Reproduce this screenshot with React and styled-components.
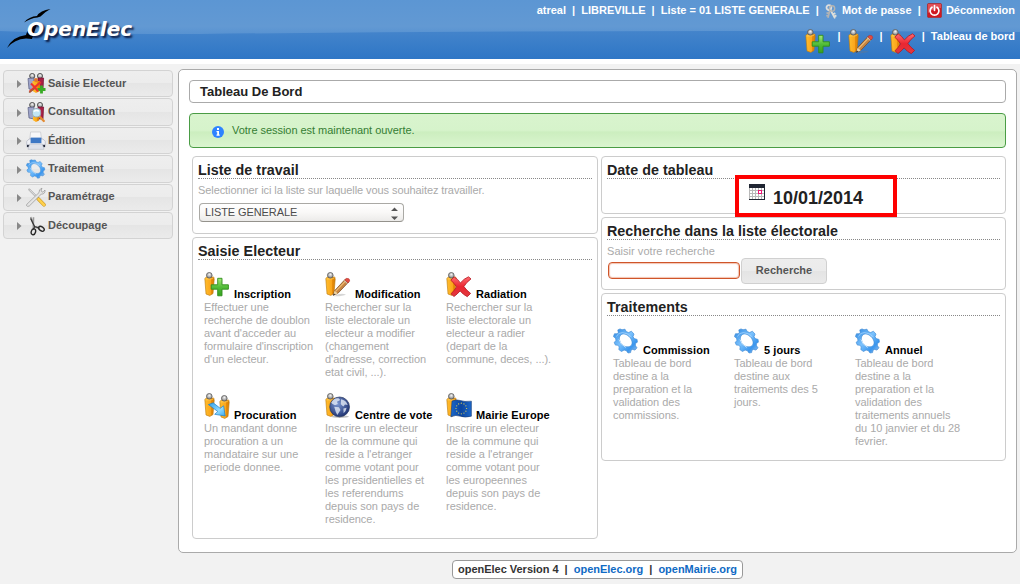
import React from "react";
import styled, { createGlobalStyle } from "styled-components";

const Global = createGlobalStyle`
  * { box-sizing: border-box; }
  body {
    margin: 0;
    background: #f2f2f2;
    font-family: "Liberation Sans", Arial, sans-serif;
    font-size: 11px;
    line-height: 13px;
    color: #222;
    overflow: hidden;
  }
`;

const Page = styled.div`
  width: 1020px;
  height: 584px;
  display: flex;
  flex-direction: column;
`;

const Header = styled.header`
  position: relative;
  flex: none;
  height: 64px;
  border-bottom: 5px solid #fff;
  display: flex;
  justify-content: space-between;
  background: linear-gradient(#5c96d3, #6299d3 45%, #5691d1 60%);
`;

const HeaderWave = styled.svg`
  position: absolute;
  left: 0;
  top: 0;
`;

const Logo = styled.div`
  position: relative;
  padding: 16px 0 0 27px;
  font: italic bold 20px/27px "DejaVu Sans", sans-serif;
  color: #fff;
  text-shadow: 2px 2px 2px rgba(0, 0, 30, 0.8);

  svg {
    position: absolute;
    left: 0;
    top: 0;
  }
  span {
    position: relative;
  }
`;

const HeaderNav = styled.div`
  position: relative;
  padding-right: 5px;
  font-weight: bold;
  color: #fff;
`;

const NavLine = styled.div`
  display: flex;
  justify-content: flex-end;
  align-items: flex-start;
  height: 26px;
  padding-top: 4px;
  white-space: pre;

  svg {
    flex: none;
  }
`;

const NavIcon = styled.span`
  display: flex;
  height: 16px;
  margin: ${(p) => p.$margin};
`;

const Body = styled.div`
  display: flex;
  align-items: flex-start;
  padding: 5px 3px 0 3px;
`;

const Menu = styled.nav`
  width: 170px;
  margin: 1px 5px 0 0;
  display: flex;
  flex-direction: column;
  gap: 1px;
`;

const MenuItem = styled.div`
  height: 27.4px;
  display: flex;
  align-items: center;
  padding: 0 0 0.6px 13px;
  border: 1px solid #d3d3d3;
  border-radius: 4px;
  background: linear-gradient(#eeeeee, #ececec 49%, #e5e5e5 50%, #ebebeb);
  color: #555;
  font-weight: bold;

  > svg:first-child {
    margin: 2px 4px 0 0;
  }
  > svg + svg {
    margin: 1px 2px 0 0;
  }
`;

const Content = styled.main`
  width: 839px;
  height: 484px;
  padding: 10px;
  border: 1px solid #aaa;
  border-radius: 5px;
  background: #fff;
`;

const PageTitle = styled.h1`
  margin: 0;
  height: 23px;
  padding-left: 10px;
  border: 1px solid #aaa;
  border-radius: 4px;
  font-size: 13px;
  line-height: 21px;
`;

const Message = styled.div`
  height: 35px;
  margin-top: 10px;
  padding: 0 0 0 22px;
  display: flex;
  border: 1px solid #4a9c45;
  border-radius: 4px;
  background: linear-gradient(#d9f4ce, #d6f3cb 49%, #cceebf 55%, #daf5cf);
  color: #357d33;
  letter-spacing: -0.04px;

  svg {
    margin: 12px 8px 0 0;
  }
  span {
    margin-top: 10px;
  }
`;

const Columns = styled.div`
  display: flex;
  gap: 3px;
  margin: 8px 0 0 3px;
`;

const Column = styled.div`
  width: ${(p) => p.$width}px;
  display: flex;
  flex-direction: column;
  gap: 3px;
`;

const Widget = styled.section`
  position: relative;
  height: ${(p) => p.$height}px;
  padding: 5px;
  border: 1px solid #ccc;
  border-radius: 4px;
  background: #fff;
`;

const WidgetTitle = styled.h2`
  margin: 0;
  height: 17px;
  border-bottom: 1px dotted #888;
  font-size: 14.3px;
  line-height: 16px;
  letter-spacing: 0.04px;
`;

const Hint = styled.p`
  margin: 5px 0 0;
  color: #aaa;
  letter-spacing: ${(p) => p.$spacing}px;
`;

const Select = styled.div`
  width: 205px;
  height: 19px;
  margin: 6px 0 0 1px;
  padding: 0 5px;
  display: flex;
  align-items: center;
  justify-content: space-between;
  border: 1px solid #aaa9a5;
  border-bottom-color: #94928c;
  border-radius: 4px;
  background: linear-gradient(#fff, #f9f8f7 50%, #ecebe9);
  color: #4c4c4c;
  letter-spacing: -0.1px;

  svg {
    margin-top: 2px;
  }
`;

const DateBox = styled.div`
  position: absolute;
  left: 133px;
  top: 18px;
  width: 162px;
  height: 42px;
  display: flex;
  padding-left: 10px;
  border: 4px solid #fe0000;
  background: #fff;
  font-size: 18px;
  font-weight: bold;

  svg {
    margin: 5px 8px 0 0;
  }
  span {
    margin-top: 9px;
    line-height: 20px;
  }
`;

const SearchRow = styled.div`
  display: flex;
  gap: 1px;
  margin-left: 1px;
`;

const SearchInput = styled.input`
  width: 132px;
  height: 17px;
  margin: 4px 0 0;
  padding: 0 4px;
  border: 1px solid #cf5529;
  border-radius: 4px;
  box-shadow: inset 0 0 1px 1px #f3c3b1;
  background: #fff;
  outline: none;
  font: inherit;
`;

const SearchButton = styled.button`
  width: 86px;
  height: 26px;
  padding: 0 0 2px;
  border: 1px solid #d0d0d0;
  border-radius: 4px;
  background: linear-gradient(#ededed, #ebebeb 49%, #e4e4e4 50%, #eaeaea);
  font: bold 11px "Liberation Sans", sans-serif;
  color: #555;
`;

const Tiles = styled.div`
  display: grid;
  grid-template-columns: repeat(3, 121px);
  grid-auto-rows: 121px;
  padding: 12px 0 0 6px;
`;

const Tile = styled.div`
  color: #aaa;
  white-space: pre;
  letter-spacing: -0.03px;
`;

const TileHead = styled.div`
  height: 29px;
  display: flex;
  color: #000;
  font-weight: bold;
  letter-spacing: 0.07px;

  svg {
    flex: none;
    margin-right: 4px;
  }
  span {
    margin-top: 16px;
  }
`;

const Footer = styled.footer`
  align-self: center;
  width: 291px;
  height: 19px;
  margin: 7px 0 0 175px;
  border: 1px solid #999;
  border-radius: 4px;
  background: #fff;
  display: flex;
  justify-content: center;
  font-weight: bold;
  line-height: 17px;
  letter-spacing: -0.02px;
  white-space: pre;
  color: #333;

  a {
    color: #0f6ac4;
  }
`;

/* Shared gradients for every icon */
const HiddenSvg = styled.svg`
  position: absolute;
`;

const Defs = () => (
  <HiddenSvg width="0" height="0">
    <defs>
      <linearGradient id="body" x1="0" x2="1">
        <stop offset="0" stopColor="#ffbe2c" />
        <stop offset=".62" stopColor="#fba61c" />
        <stop offset=".68" stopColor="#e88d0a" />
        <stop offset="1" stopColor="#d98104" />
      </linearGradient>
      <radialGradient id="head" cx=".5" cy=".35" r=".6">
        <stop offset="0" stopColor="#f5f5f5" />
        <stop offset="1" stopColor="#888" />
      </radialGradient>
      <linearGradient id="green" x1="0" y1="0" x2="0" y2="1">
        <stop offset="0" stopColor="#a5e87a" />
        <stop offset=".5" stopColor="#52bd3a" />
        <stop offset="1" stopColor="#36a01f" />
      </linearGradient>
      <linearGradient id="red" x1="0" y1="0" x2="0" y2="1">
        <stop offset="0" stopColor="#ff6c70" />
        <stop offset=".5" stopColor="#ea2631" />
        <stop offset="1" stopColor="#e23b40" />
      </linearGradient>
      <linearGradient id="gear" x1="0" y1="0" x2="1" y2="1">
        <stop offset="0" stopColor="#2a86e0" />
        <stop offset=".45" stopColor="#7cc2fd" />
        <stop offset=".75" stopColor="#3a96ee" />
        <stop offset="1" stopColor="#a9c6ea" />
      </linearGradient>
      <radialGradient id="globe" cx=".4" cy=".35" r=".7">
        <stop offset="0" stopColor="#7a96d0" />
        <stop offset="1" stopColor="#1c2f6e" />
      </radialGradient>
      <linearGradient id="arrow" x1="0" y1="0" x2="1" y2="1">
        <stop offset="0" stopColor="#2c9ce6" />
        <stop offset=".6" stopColor="#94dcff" />
        <stop offset="1" stopColor="#36a9ef" />
      </linearGradient>
      <linearGradient id="flag" x1="0" x2="1">
        <stop offset="0" stopColor="#1a68cb" />
        <stop offset=".5" stopColor="#0b459f" />
        <stop offset="1" stopColor="#1c68c9" />
      </linearGradient>
      <linearGradient id="wave" x1="0" y1="0" x2="0" y2="1">
        <stop offset="0" stopColor="#4484cb" />
        <stop offset="1" stopColor="#2e76c6" />
      </linearGradient>
    </defs>
  </HiddenSvg>
);

const Person = ({ x = 0, y = 0 }) => (
  <g transform={`translate(${x} ${y})`}>
    <path d="M.8 6.4 2.4 5H9.8L10.2 7.3 9 21.6 5.8 23.4 2 22Z" fill="url(#body)" stroke="#b9770f" strokeWidth=".6" />
    <path d="M1.6 6.9H7.2L9.6 5.6" stroke="#ffd465" strokeWidth=".7" fill="none" />
    <circle cx="5.3" cy="3.3" r="2.8" fill="url(#head)" stroke="#5c5c5c" strokeWidth=".8" />
  </g>
);

const Plus = () => (
  <path d="M13.7 6.3H18V12.8H24.4V17.2H18V23.8H13.7V17.2H7.2V12.8H13.7Z" fill="url(#green)" stroke="#2f8d1c" strokeWidth=".9" />
);

const Pencil = () => (
  <g>
    <path d="M9 24.2Q15 20.5 21 22.4Q18 24.4 9 24.2" fill="#777" opacity=".3" />
    <path d="M8.2 23.3 9.6 18.7 20.4 7.1 23.6 10.1 12.8 21.4Z" fill="#c78643" stroke="#79431b" strokeWidth=".7" />
    <path d="M10.6 19.4 20.6 8.9" stroke="#edbd76" strokeWidth="1.2" />
    <path d="M8.2 23.3 9.6 18.7 12.8 21.4Z" fill="#ecd4a4" />
    <path d="m8 23.6.8-2.2 1.5 1.2Z" fill="#222" />
    <path d="M19.8 8 21.3 6.3Q24.9 5.8 24.8 9.1L23 11Z" fill="#e24b42" stroke="#a32a25" strokeWidth=".4" />
    <path d="m19.2 8.6 3.2 3" stroke="#ccc" strokeWidth="1" />
  </g>
);

const Cross = () => (
  <path
    d="M4.8 8.2 8.2 4.9Q11.6 6.8 14.4 10.9Q17.9 6.7 22.5 4.8L25 6.9Q20.2 10.4 17.9 14.6Q20.6 18.4 24.6 21.4L21.3 24.7Q17.3 22.8 14.1 18.9Q11.1 22.4 8 24.5L5 21.8Q8.3 18.5 10.6 14.9Q8.4 11.3 4.8 8.2Z"
    fill="url(#red)"
    stroke="#b51721"
    strokeWidth=".8"
  />
);

const Gear = ({ size = 26 }) => (
  <svg width={size} height={size} viewBox="0 0 26 26">
    <path
      fillRule="evenodd"
      d="M9 1.7 12 1.2 13.2 3.6 15.6 4.5 18.4 3.2 21 6.1 20 8.8 21.3 10.6 24.1 11.4 24.4 14.2 22.4 15.5 22.5 17.8 24 19.8 22 22.1 19.5 21.4 18 22.3 17.6 24.6 15 25 13.4 22.7 11.1 22.1 8.5 23.5 5.8 21.6 6.2 18.9 4.8 17.2 2.4 17.1 1.1 14.4 3 12.5 2.5 10.2.4 8.6 1.5 5.7 4 5.8 5.3 4.5 4.8 1.9 7 .9ZM7.6 7.2C5.5 9.4 6.2 13.9 9.1 16.7S16.5 19.3 18.2 17.4 19.1 11.4 16 8.5 9.6 5.2 7.6 7.2Z"
      fill="url(#gear)"
      stroke="#3784d2"
      strokeWidth=".6"
    />
    <path d="M3.5 8.5Q5 4.6 9.2 4.6Q14.5 4.8 18.5 9" fill="none" stroke="#b5dcff" strokeWidth=".8" opacity=".8" />
    <path d="M5.9 11.5Q7.4 16.6 12.8 19.4" fill="none" stroke="#c8e6ff" strokeWidth="1" />
  </svg>
);

const STAR_ANGLES = Array.from({ length: 12 }, (_, i) => (i * Math.PI) / 6);

const overlays = {
  add: <Plus />,
  edit: <Pencil />,
  remove: <Cross />,
  proxy: (
    <g>
      <Person x={15} y={2} />
      <path d="M4.4 11.6 9.2 9.8 16.2 15.3 19.6 12.8 21.2 23 10.7 21.3 13.8 18.5Z" fill="url(#arrow)" stroke="#1d7fca" strokeWidth=".7" />
    </g>
  ),
  globe: (
    <g>
      <ellipse cx="15" cy="23.6" rx="9" ry="1.3" opacity=".25" />
      <circle cx="14.6" cy="13.9" r="9.9" fill="url(#globe)" stroke="#26365f" strokeWidth=".7" />
      <path d="M6.2 9.5Q9 4.6 13.5 5.2L15.3 7 12 8.8 12.8 11 10 12.2 7.5 11ZM16 6.2Q21 7 22.7 12L20 11.5 18.3 13.6 15.8 11.3ZM9.2 13.7 14 14.3 15.5 17.1 12.3 22 10.7 18.7ZM18.4 15.5 21.6 14.8Q21 18.5 18.6 20.3Z" fill="#e3ebf6" opacity=".8" />
    </g>
  ),
  europe: (
    <g>
      <path d="M6 8.1Q10.5 6 14.3 7.5T25.4 8.2V23.2Q18.7 25 14.3 23.2T4.9 23.8Z" fill="url(#flag)" stroke="#173c75" strokeWidth=".6" />
      {STAR_ANGLES.map((a) => (
        <circle key={a} cx={15.3 + Math.cos(a) * 5.3} cy={15.5 + Math.sin(a) * 5.3} r=".6" fill="#e3d350" />
      ))}
    </g>
  ),
};

const VoterIcon = ({ kind }) => (
  <svg width="26" height="26" viewBox="0 0 26 26">
    <Person />
    {overlays[kind]}
  </svg>
);

const GroupPeople = () => (
  <g>
    <circle cx="6.2" cy="3" r="2.6" fill="url(#head)" stroke="#444" strokeWidth=".8" />
    <circle cx="14" cy="3" r="2.6" fill="url(#head)" stroke="#444" strokeWidth=".8" />
    <path d="M2 5.5 8 5V17L3 16Z" fill="#9fa5cb" stroke="#55597d" strokeWidth=".7" />
    <path d="M12 5H17.6L17 17H12Z" fill="#a91f45" stroke="#6e1431" strokeWidth=".7" />
  </g>
);

const menuIcons = {
  entry: (
    <svg width="20" height="21" viewBox="0 0 20 21">
      <GroupPeople />
      <path d="M6.5 8H14V18L10 20 6.5 18Z" fill="url(#body)" />
      <circle cx="10" cy="7" r="2.1" fill="#df762f" />
      <path d="M15.5 12.5V20.5M11.5 16.5H19.5" stroke="#39ab26" strokeWidth="2.8" />
      <path d="M3.5 18.8Q8 15 14.7 9M5 10.5Q9 14 12 18.4" stroke="#ec3330" strokeWidth="2.2" fill="none" />
      <path d="m3 19.6 5.5-3.8" stroke="#9c633a" strokeWidth="1.2" />
    </svg>
  ),
  search: (
    <svg width="20" height="21" viewBox="0 0 20 21">
      <GroupPeople />
      <path d="M7 12H13V18.5L10 20 7 18.3Z" fill="url(#body)" />
      <path d="m14 15 3.8 4" stroke="#e38b32" strokeWidth="2.3" strokeLinecap="round" />
      <rect x="6.4" y="6.5" width="8.2" height="8.4" rx="3.2" fill="#c1e5f6" stroke="#99abb4" />
      <path d="M7.7 9.5Q10 7.5 13 9.2" stroke="#fff" fill="none" strokeWidth="1.4" />
    </svg>
  ),
  print: (
    <svg width="20" height="20" viewBox="0 0 20 20">
      <path d="M4.6 1H14.6L15.5 8H3.8Z" fill="#f7f7f9" stroke="#c4c5ca" strokeWidth=".7" />
      <path d="M3 8H17L19.3 10.5V15Q19.3 16.6 17.5 16.6H2.5Q.7 16.6.7 15V10.5Z" fill="#eef0f6" stroke="#b1b5c3" strokeWidth=".7" />
      <path d="M4.6 6.6H15.4V12.2H4.6Z" fill="#3e78c5" />
      <path d="M1 13.8H19V16H1Z" fill="#262c3d" />
      <path d="M3.6 13H16.4L18 18.3H2Z" fill="#dfe2ea" stroke="#aeb3bd" strokeWidth=".5" />
    </svg>
  ),
  gear: <Gear size={20} />,
  tools: (
    <svg width="20" height="20" viewBox="0 0 20 20">
      <path d="M3.2 2.5 12.2 11.5" stroke="#a6a6a6" strokeWidth="1.9" strokeLinecap="round" />
      <path d="M3.2 2.5 12.2 11.5" stroke="#eee" strokeWidth="1" />
      <path d="M12.4 12 18 17.8" stroke="#c99b2c" strokeWidth="3.6" strokeLinecap="round" />
      <path d="M12.4 12 18 17.8" stroke="#ffd04b" strokeWidth="2.5" strokeLinecap="round" />
      <path d="M1 17.1 13 5.6Q12.7 2.2 16 1.1L15 4 17 5.2 19 3Q19.6 7 15.1 7.3L3.2 19.1Q1.3 20 .2 18.3Z" fill="#e4e4e4" stroke="#8a8a8a" strokeWidth=".6" />
    </svg>
  ),
  scissors: (
    <svg width="20" height="20" viewBox="0 0 20 20">
      <path d="M4.7 1.1 8.6 12M7.5 1.3 7.3 12M8.3 11 14 12.4" stroke="#999" strokeWidth="1.6" fill="none" />
      <path d="M4.6 2.6 8.6 10.6 12.5 11.6M8.6 10.6 7.4 13.6" stroke="#333" strokeWidth="1.2" fill="none" />
      <ellipse cx="7.4" cy="15.8" rx="2.1" ry="3" transform="rotate(18 7.4 15.8)" fill="none" stroke="#292929" strokeWidth="1.4" />
      <ellipse cx="15.4" cy="12.8" rx="3.1" ry="2" transform="rotate(35 15.4 12.8)" fill="none" stroke="#292929" strokeWidth="1.4" />
    </svg>
  ),
};

const KeysIcon = () => (
  <svg width="13" height="16" viewBox="0 0 13 16">
    <path d="M5 5.5 2.9 13.8M3.8 9.3 1.5 8.9M3.2 12 1.2 11.5" stroke="#b2b3b3" strokeWidth="1.8" />
    <path d="m5.5 6 4.5 8.4M8 10.4 10.3 9M9.2 12.6 11.4 11.4" stroke="#deded9" strokeWidth="1.8" />
    <circle cx="3.9" cy="3.6" r="2.4" fill="none" stroke="#dedede" strokeWidth="1.8" />
    <circle cx="7" cy="4.4" r="2.7" fill="none" stroke="#b4b4b1" strokeWidth="1.4" />
  </svg>
);

const PowerIcon = () => (
  <svg width="15" height="15" viewBox="0 0 15 15">
    <rect x=".4" y=".4" width="14.2" height="14.2" rx="1.5" fill="#cf1822" stroke="#a43035" strokeWidth=".8" />
    <path d="M1 1H14V5Q7 5 1 10Z" fill="#ef7175" opacity=".6" />
    <path d="M5 4.2A4.4 4.4 0 1 0 10 4.2M7.5 2.5V7.3" fill="none" stroke="#fff" strokeWidth="1.7" strokeLinecap="round" />
  </svg>
);

const CalendarIcon = () => (
  <svg width="16" height="16" viewBox="0 0 16 16" shapeRendering="crispEdges">
    <rect width="16" height="16" fill="#202633" />
    <path d="M0 4H15V15H0Z" fill="#b9b9b9" />
    {[4, 7, 10, 13].map((y) =>
      [1, 4, 7, 10, 13].map((x) => <rect key={`${x}-${y}`} x={x} y={y} width="2" height="2" fill="#fff" />)
    )}
    <rect x="9.5" y="6.5" width="3" height="3" fill="#fff" stroke="#ed1675" />
  </svg>
);

const MENU = [
  ["Saisie Electeur", "entry"],
  ["Consultation", "search"],
  ["Édition", "print"],
  ["Traitement", "gear"],
  ["Paramétrage", "tools"],
  ["Découpage", "scissors"],
];

const ENTRY_TILES = [
  ["add", "Inscription", "Effectuer une\nrecherche de doublon\navant d'acceder au\nformulaire d'inscription\nd'un electeur."],
  ["edit", "Modification", "Rechercher sur la\nliste electorale un\nelecteur a modifier\n(changement\nd'adresse, correction\netat civil, ...)."],
  ["remove", "Radiation", "Rechercher sur la\nliste electorale un\nelecteur a radier\n(depart de la\ncommune, deces, ...)."],
  ["proxy", "Procuration", "Un mandant donne\nprocuration a un\nmandataire sur une\nperiode donnee."],
  ["globe", "Centre de vote", "Inscrire un electeur\nde la commune qui\nreside a l'etranger\ncomme votant pour\nles presidentielles et\nles referendums\ndepuis son pays de\nresidence."],
  ["europe", "Mairie Europe", "Inscrire un electeur\nde la commune qui\nreside a l'etranger\ncomme votant pour\nles europeennes\ndepuis son pays de\nresidence."],
];

const PROCESS_TILES = [
  ["Commission", "Tableau de bord\ndestine a la\npreparation et la\nvalidation des\ncommissions."],
  ["5 jours", "Tableau de bord\ndestine aux\ntraitements des 5\njours."],
  ["Annuel", "Tableau de bord\ndestine a la\npreparation et la\nvalidation des\ntraitements annuels\ndu 10 janvier et du 28\nfevrier."],
];

export default function App() {
  return (
    <Page>
      <Global />
      <Defs />
      <Header>
        <HeaderWave width="1020" height="59">
          <path d="M0 31Q90 34.5 200 34Q620 29 1020 32V59H0Z" fill="url(#wave)" />
        </HeaderWave>
        <Logo>
          <svg width="60" height="55" viewBox="0 0 60 55">
            <path d="M24 22.5Q29 16.5 37 16Q40 10.5 50.5 9Q44.5 12 40.5 16.5L37.5 17.4Q30 18.2 24 22.5Z" fill="#000" />
            <path d="M7 48Q12.5 36.5 26 35Q27.5 28 37 24L32 39 26 38.5Q14.5 39 7 48Z" fill="#000" />
          </svg>
          <span>OpenElec</span>
        </Logo>
        <HeaderNav>
          <NavLine>
            {"atreal  |  LIBREVILLE  |  Liste = 01 LISTE GENERALE  |  "}
            <NavIcon $margin="0 4px 0 0"><KeysIcon /></NavIcon>
            {"Mot de passe  |  "}
            <NavIcon $margin="-1px 4px 0 0"><PowerIcon /></NavIcon>
            {"Déconnexion"}
          </NavLine>
          <NavLine>
            <NavIcon $margin="-1px 7px 0 0"><VoterIcon kind="add" /></NavIcon>
            {"|"}
            <NavIcon $margin="-1px 6px 0 7px"><VoterIcon kind="edit" /></NavIcon>
            {"|"}
            <NavIcon $margin="-1px 6px 0 7px"><VoterIcon kind="remove" /></NavIcon>
            {"|  Tableau de bord"}
          </NavLine>
        </HeaderNav>
      </Header>

      <Body>
        <Menu>
          {MENU.map(([label, icon]) => (
            <MenuItem key={label}>
              <svg width="5" height="8" viewBox="0 0 5 8"><path d="M0 0 4.5 4 0 8Z" fill="#888" /></svg>
              {menuIcons[icon]}
              {label}
            </MenuItem>
          ))}
        </Menu>

        <Content>
          <PageTitle>Tableau De Bord</PageTitle>
          <Message>
            <svg width="12" height="12" viewBox="0 0 12 12">
              <circle cx="6" cy="6" r="6" fill="#2e83ff" />
              <path d="M5 2H7V4H5ZM4.5 5H7V8.5H7.7V9.7H4.5V8.5H5.2V6.2H4.5Z" fill="#fff" />
            </svg>
            <span>Votre session est maintenant ouverte.</span>
          </Message>

          <Columns>
            <Column $width={406}>
              <Widget $height={78}>
                <WidgetTitle>Liste de travail</WidgetTitle>
                <Hint $spacing={-0.08}>Selectionner ici la liste sur laquelle vous souhaitez travailler.</Hint>
                <Select>
                  LISTE GENERALE
                  <svg width="7" height="13" viewBox="0 0 7 13">
                    <path d="M0 4 3.5 .5 7 4ZM0 9.5 3.5 13 7 9.5Z" fill="#555" />
                  </svg>
                </Select>
              </Widget>
              <Widget $height={302}>
                <WidgetTitle>Saisie Electeur</WidgetTitle>
                <Tiles>
                  {ENTRY_TILES.map(([kind, title, text]) => (
                    <Tile key={kind}>
                      <TileHead><VoterIcon kind={kind} /><span>{title}</span></TileHead>
                      {text}
                    </Tile>
                  ))}
                </Tiles>
              </Widget>
            </Column>

            <Column $width={405}>
              <Widget $height={58}>
                <WidgetTitle>Date de tableau</WidgetTitle>
                <DateBox><CalendarIcon /><span>10/01/2014</span></DateBox>
              </Widget>
              <Widget $height={73}>
                <WidgetTitle>Recherche dans la liste électorale</WidgetTitle>
                <Hint $spacing={0.04}>Saisir votre recherche</Hint>
                <SearchRow>
                  <SearchInput />
                  <SearchButton>Recherche</SearchButton>
                </SearchRow>
              </Widget>
              <Widget $height={168}>
                <WidgetTitle>Traitements</WidgetTitle>
                <Tiles>
                  {PROCESS_TILES.map(([title, text]) => (
                    <Tile key={title}>
                      <TileHead><Gear /><span>{title}</span></TileHead>
                      {text}
                    </Tile>
                  ))}
                </Tiles>
              </Widget>
            </Column>
          </Columns>
        </Content>
      </Body>

      <Footer>
        {"openElec Version 4  |  "}<a>openElec.org</a>{"  |  "}<a>openMairie.org</a>
      </Footer>
    </Page>
  );
}
